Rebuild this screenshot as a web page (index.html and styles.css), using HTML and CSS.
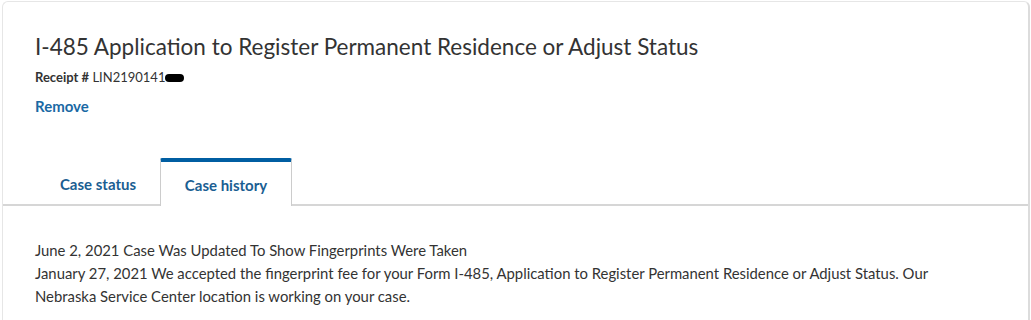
FILE: index.html
```html
<!DOCTYPE html>
<html>
<head>
<meta charset="utf-8">
<link rel="stylesheet" href="styles.css">
</head>
<body>
<div class="card">
  <div class="head">
    <h1 class="title">I-485 Application to Register Permanent Residence or Adjust Status</h1>
    <div class="receipt"><b>Receipt #</b> LIN2190141<span class="redact"></span></div>
    <a class="remove" href="#">Remove</a>
  </div>
  <div class="tabs">
    <div class="tab">Case status</div>
    <div class="tab active">Case history</div>
  </div>
  <div class="body">
    <p>June 2, 2021 Case Was Updated To Show Fingerprints Were Taken</p>
    <p>January 27, 2021 We accepted the fingerprint fee for your Form I-485, Application to Register Permanent Residence or Adjust Status. Our Nebraska Service Center location is working on your case.</p>
  </div>
</div>
</body>
</html>
```
FILE: styles.css
```css
html, body { margin: 0; padding: 0; background: #fff; }
body { font-family: Lato, "Open Sans", sans-serif; color: #323a45; }
.card {
  margin: 1px 1px 0 2px;
  border: 1px solid #e6e6e6;
  border-right: 2px solid #dcdcdc;
  border-bottom: none;
  border-radius: 6px 6px 0 0;
  height: 330px;
  box-sizing: border-box;
}
.head { padding: 31px 32px 0 32px; }
.title { margin: 0; font-weight: 400; font-size: 22.5px; line-height: 28px; color: #333; }
.receipt { margin-top: 8px; font-size: 13px; line-height: 16px; color: #333; }
.receipt b { font-weight: 700; }
.redact { display: inline-block; width: 19px; height: 8px; background: #000; border-radius: 4px; vertical-align: 0px; }
.remove { display: inline-block; margin-top: 11px; font-size: 15px; font-weight: 700; color: #1a69a4; text-decoration: none; line-height: 20px; }
.tabs { display: flex; margin-top: 42px; border-bottom: 2px solid #d6d6d6; padding-left: 33px; height: 46px; }
.tab { width: 124px; box-sizing: border-box; text-align: center; font-size: 15px; font-weight: 700; color: #1a5e92; padding-top: 17px; }
.tab.active { width: 132px; border: 1px solid #ccc; border-top: 4px solid #005ea2; border-bottom: none; background: #fff; margin-bottom: -2px; padding-top: 14px; border-radius: 2px 2px 0 0; }
.body { padding: 33px 60px 0 32px; font-size: 14.85px; line-height: 23px; color: #333; }
.body p { margin: 0; }
```
